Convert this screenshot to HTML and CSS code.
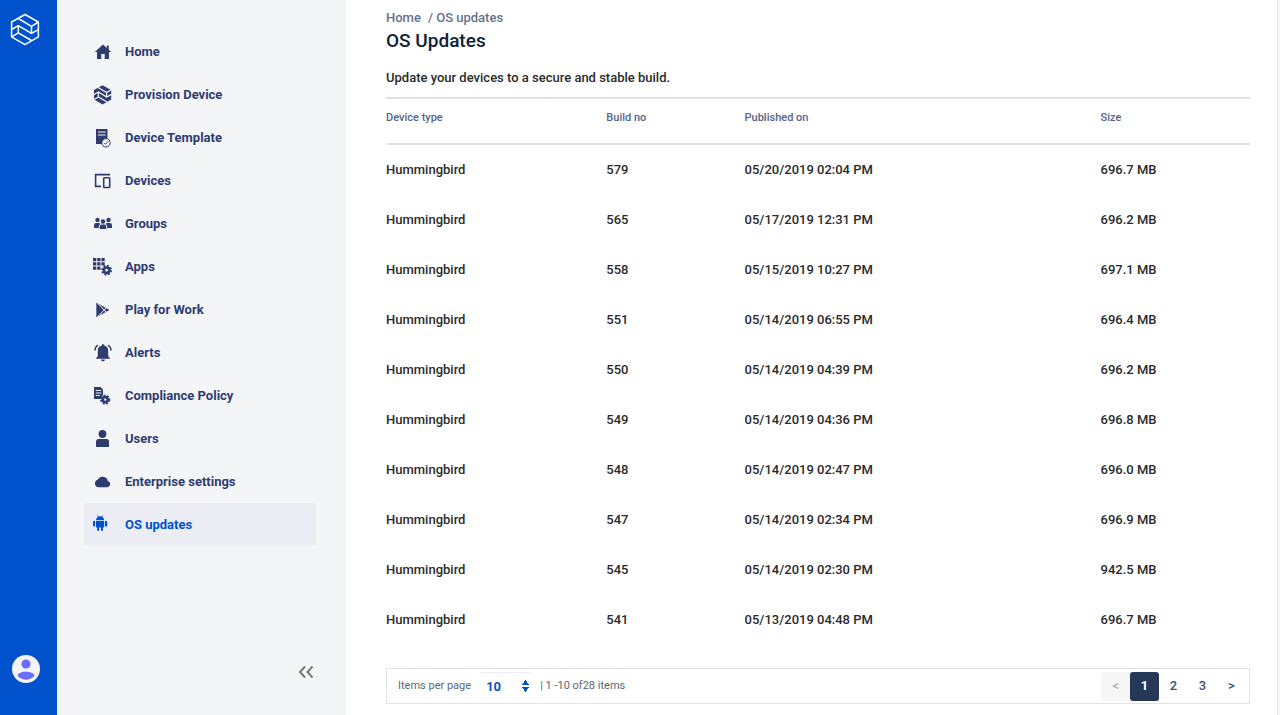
FILE: index.html
```html
<!DOCTYPE html>
<html lang="en">
<head>
<meta charset="utf-8">
<meta name="viewport" content="width=device-width, initial-scale=1">
<title>OS Updates</title>
<link rel="stylesheet" href="styles.css">
</head>
<body>
<div class="app">
  <header class="rail">
    <a class="logo" href="#" aria-label="Dashboard">
      <svg width="30" height="34" viewBox="0 0 30 34" fill="none" stroke="#fff" stroke-width="1.500" stroke-linejoin="round"><path d="M15 1.500 28.400 9V23.900L15 31.700 1.600 23.900V9z"/><path d="M8.300 5.500 21.500 13.300 28.400 9M21.500 13.300V20.400M1.600 16.500 8.300 12.700 21.500 20.400 28.400 16.700M8.300 12.700V19.800M1.600 23.900 8.300 19.800 21.500 27.500"/></svg>
    </a>
    <button class="avatar" type="button" aria-label="Account">
      <svg width="28" height="28" viewBox="0 0 28 28"><circle cx="14" cy="14" r="14" fill="#f3f3f5"/><circle cx="14" cy="9" r="4.600" fill="#6c6cff"/><path d="M5.500 20.500c1.500-5 15.500-5 17 0-3 5.500-14 5.500-17 0z" fill="#6c6cff"/></svg>
    </button>
  </header>
  <aside class="sidebar">
    <nav class="menu" aria-label="Main">
      <a class="item" href="#"><svg class="icon" viewBox="0 0 22 22"><path d="M11 3.500 2.800 11H5v7h4.300v-5h3.400v5H17v-7h2.200l-2.400-2.200V4.500h-2V7z"/></svg>Home</a>
      <a class="item" href="#"><svg class="icon" viewBox="0 0 22 22"><path d="M10.600 1.200 19.200 6v9.600l-8.600 4.900L2 15.600V6z"/><path class="cut" d="M6 3.400 14.600 8.600 19.600 5.600M1.600 10.700 6.400 8 14.600 13 19.600 10.400M1.600 15.800 6.400 12.900 15 18M14.600 9V13M6.400 8.200V12.900"/></svg>Provision Device</a>
      <a class="item" href="#"><svg class="icon" viewBox="0 0 22 22"><path d="M4 2h11.500v15H4z"/><path class="cut" d="M6 5h7.500M6 8h7.500"/><circle class="badge" cx="14" cy="15.800" r="4.200"/><path class="thin" d="m12 15.800 1.500 1.500 2.700-2.900"/></svg>Device Template</a>
      <a class="item" href="#"><svg class="icon" viewBox="0 0 22 22"><path class="line" d="M18 4.600H3.600v11.800H9"/><rect class="line" x="11.700" y="7.700" width="6" height="9.800" rx=".8"/></svg>Devices</a>
      <a class="item" href="#"><svg class="icon" viewBox="0 0 22 22"><circle cx="5.500" cy="7" r="2.200"/><circle cx="16.500" cy="7" r="2.200"/><path d="M2 15v-2.800q0-2.200 2.200-2.200h2.600q1.200 0 1.700 1-1.700 1-1.700 2.400V15zM20 15v-2.800q0-2.200-2.200-2.200h-2.600q-1.200 0-1.700 1 1.700 1 1.700 2.400V15z"/><circle cx="11" cy="8.500" r="2.200"/><path d="M7.700 16v-2.300q0-2.300 2.200-2.300h2.200q2.200 0 2.200 2.300V16z"/></svg>Groups</a>
      <a class="item" href="#"><svg class="icon" viewBox="0 0 22 22"><path d="M1 2h3.300v3.300H1zM5.200 2h3.300v3.300H5.200zM9.400 2h3.300v3.300H9.400zM1 6.200h3.300v3.300H1zM5.200 6.200h3.300v3.300H5.200zM9.400 6.200h3.300v3.300H9.400zM1 10.400h3.300v3.300H1zM5.200 10.400h3.300v3.300H5.200z"/><circle class="gear" cx="14.600" cy="14.200" r="2.700"/><circle class="teeth" cx="14.600" cy="14.200" r="4.500"/></svg>Apps</a>
      <a class="item" href="#"><svg class="icon" viewBox="0 0 22 22"><path d="M4.300 3.500 17.500 11 4.300 18.300z"/><path class="cut hair" d="M5 3.500 14.500 13.500M5 18.500 14.500 8.500"/></svg>Play for Work</a>
      <a class="item" href="#"><svg class="icon" viewBox="0 0 22 22"><path d="M11 2.300c.8 0 1.200.5 1.200 1.200 2.600.6 4 2.600 4 5.200v5.500l1.600 1.600v.9H4.200v-.9l1.600-1.600V8.700c0-2.600 1.400-4.600 4-5.200 0-.7.4-1.200 1.200-1.200zM9.200 17.400h3.600c0 1.200-.7 1.900-1.800 1.900s-1.800-.7-1.800-1.900z"/><path class="line" d="M5.700 3.200Q3 5.200 2.900 8.500M16.300 3.200q2.700 2 2.800 5.300"/></svg>Alerts</a>
      <a class="item" href="#"><svg class="icon" viewBox="0 0 22 22"><path d="M2 2h6.500l2.500 2.500V10q-2.500 1.500-2 4H2z"/><path class="cut hair" d="M3.800 5.500h5.400M3.800 8h5.400M3.800 10.500h4"/><circle class="gear" cx="13.200" cy="14.600" r="2.500"/><circle class="teeth" cx="13.200" cy="14.600" r="4.200"/></svg>Compliance Policy</a>
      <a class="item" href="#"><svg class="icon" viewBox="0 0 22 22"><circle cx="10.500" cy="6" r="3.900"/><path d="M4 19v-5.500Q4 11 6.500 11h8q2.500 0 2.500 2.500V19z"/></svg>Users</a>
      <a class="item" href="#"><svg class="icon" viewBox="0 0 22 22"><path d="M6.500 16.300a3.900 3.900 0 0 1-.8-7.600 5.500 5.500 0 0 1 10.200 1.200 3.300 3.300 0 0 1-.4 6.400z"/></svg>Enterprise settings</a>
      <a class="item active" href="#" aria-current="page"><svg class="icon" viewBox="0 0 22 22"><path d="M4 6.200Q4 3.800 5.900 2.900L5 1.500l.5-.3 1 1.400q1.600-.6 3.200 0l1-1.400.5.300-.9 1.400Q12.200 3.800 12.200 6.200zM4 7h8.200v6.600H11V16q0 1.100-1 1.100T9 16v-2.400H7.200V16q0 1.100-1 1.100t-1-1.100v-2.400H4z"/><rect x="1" y="6.700" width="2.200" height="6" rx="1.100"/><rect x="13" y="6.700" width="2.200" height="6" rx="1.100"/></svg>OS updates</a>
    </nav>
    <button class="collapse" type="button" aria-label="Collapse menu">
      <svg width="16" height="14" viewBox="0 0 16 14" fill="none" stroke="#757575" stroke-width="1.900"><path d="M7 1.500 2 7l5 5.500M14.500 1.500l-5 5.500 5 5.500"/></svg>
    </button>
  </aside>
  <main class="content">
    <nav class="crumbs" aria-label="Breadcrumb"><a href="#">Home</a><span>/ OS updates</span></nav>
    <h1>OS Updates</h1>
    <p class="intro">Update your devices to a secure and stable build.</p>
    <table class="builds">
      <thead><tr><th class="type">Device type</th><th class="build">Build no</th><th class="date">Published on</th><th>Size</th></tr></thead>
      <tbody>
        <tr><td>Hummingbird</td><td>579</td><td>05/20/2019 02:04 PM</td><td>696.7 MB</td></tr>
        <tr><td>Hummingbird</td><td>565</td><td>05/17/2019 12:31 PM</td><td>696.2 MB</td></tr>
        <tr><td>Hummingbird</td><td>558</td><td>05/15/2019 10:27 PM</td><td>697.1 MB</td></tr>
        <tr><td>Hummingbird</td><td>551</td><td>05/14/2019 06:55 PM</td><td>696.4 MB</td></tr>
        <tr><td>Hummingbird</td><td>550</td><td>05/14/2019 04:39 PM</td><td>696.2 MB</td></tr>
        <tr><td>Hummingbird</td><td>549</td><td>05/14/2019 04:36 PM</td><td>696.8 MB</td></tr>
        <tr><td>Hummingbird</td><td>548</td><td>05/14/2019 02:47 PM</td><td>696.0 MB</td></tr>
        <tr><td>Hummingbird</td><td>547</td><td>05/14/2019 02:34 PM</td><td>696.9 MB</td></tr>
        <tr><td>Hummingbird</td><td>545</td><td>05/14/2019 02:30 PM</td><td>942.5 MB</td></tr>
        <tr><td>Hummingbird</td><td>541</td><td>05/13/2019 04:48 PM</td><td>696.7 MB</td></tr>
      </tbody>
    </table>
    <div class="pager">
      <label for="size">Items per page</label>
      <select id="size" class="size"><option>10</option><option>25</option><option>50</option></select>
      <span class="range">| 1 -10 of28 items</span>
      <nav class="pages" aria-label="Pages">
        <button type="button" class="page" disabled aria-label="Previous page">&lt;</button>
        <button type="button" class="page current" aria-current="page">1</button>
        <button type="button" class="page">2</button>
        <button type="button" class="page">3</button>
        <button type="button" class="page" aria-label="Next page">&gt;</button>
      </nav>
    </div>
  </main>
</div>
</body>
</html>
```
FILE: styles.css
```css
* { box-sizing: border-box; }
body {
  margin: 0;
  background: #f8f8fa;
  color: #2b2b2b;
  font: 500 13px/20px Roboto, "Liberation Sans", sans-serif;
}
a { color: inherit; text-decoration: none; }
button, select { font: inherit; border: 0; padding: 0; cursor: pointer; }
.app { display: flex; min-height: 100vh; padding-right: 2px; }

.rail {
  flex: 0 0 57px;
  display: flex;
  flex-direction: column;
  justify-content: space-between;
  background: #0052cc;
  padding: 13px 10px 32px;
}
.logo { display: block; height: 34px; }
.avatar { display: block; width: 32px; height: 28px; background: none; }
.avatar svg { display: block; margin: 0 auto; }

.sidebar {
  flex: 0 0 289px;
  display: flex;
  flex-direction: column;
  justify-content: space-between;
  background: #f4f5f7;
  padding: 30px 30px 35px 27px;
}
.menu { display: flex; flex-direction: column; }
.item {
  display: flex;
  align-items: center;
  gap: 11px;
  height: 43px;
  padding: 0 8px;
  border-radius: 3px;
  color: #2f3c70;
  font-weight: 700;
}
.active { background: #ecedf4; color: #0052cc; }
.icon { width: 22px; height: 22px; fill: currentColor; }
.line, .thin, .cut, .gear, .teeth { fill: none; stroke: currentColor; stroke-width: 1.6; }
.thin { stroke-width: 1; }
.cut { stroke: #f4f5f7; stroke-width: 1.2; }
.hair { stroke-width: 1; }
.badge { fill: #f4f5f7; stroke: currentColor; stroke-width: 1; }
.gear { stroke-width: 2.6; }
.teeth { stroke-width: 1.8; stroke-dasharray: 2 1.5; }
.collapse { align-self: flex-end; width: 18px; height: 16px; background: none; }
.collapse svg { display: block; }

.content {
  flex: 1;
  min-width: 0;
  background: #fff;
  border-right: 1px solid #e4e6ea;
  padding: 8px 27px 11px 40px;
}
.crumbs { display: flex; gap: 7px; color: #66718c; }
h1 { margin: 0; font-size: 19px; line-height: 26px; font-weight: 500; color: #0d2236; }
.intro { margin: 14px 0 9px; }
.builds { width: 100%; table-layout: fixed; border-spacing: 0; text-align: left; }
th {
  height: 48px;
  padding: 0 0 6px;
  border-top: 2px solid #dfe1e8;
  border-bottom: 2px solid #dfe1e8;
  color: #56648a;
  font-size: 11px;
  font-weight: 500;
}
td { height: 50px; padding: 0; }
.type { width: 25.5%; }
.build { width: 16%; }
.date { width: 41.2%; }

.pager {
  display: flex;
  align-items: center;
  height: 36px;
  margin-top: 23px;
  padding: 0 3px 0 11px;
  border: 1px solid #dfe4e8;
  color: #5a6872;
  font-size: 11px;
  font-weight: 400;
}
.size {
  appearance: none;
  width: 54px;
  height: 28px;
  margin: 0 5px 0 8px;
  padding-left: 7px;
  border-top: 1px solid #eceef2;
  border-radius: 4px;
  color: #0052cc;
  font-size: 13px;
  font-weight: 700;
  background:
    conic-gradient(from 143deg at 50% 0, #0052cc 74deg, transparent 0) right 4px top 7px / 7px 5px no-repeat,
    conic-gradient(from -37deg at 50% 100%, #0052cc 74deg, transparent 0) right 4px top 14px / 7px 5px no-repeat,
    #fff;
}
.range { margin-left: 2px; }
.pages { display: flex; margin-left: auto; }
.page {
  width: 29px;
  height: 29px;
  border-radius: 3px;
  background: none;
  color: #42526e;
  font-size: 13px;
  font-weight: 500;
}
.page:disabled { background: #f6f6f6; color: #a5adba; }
.current { background: #253858; color: #fff; font-weight: 700; }
```
